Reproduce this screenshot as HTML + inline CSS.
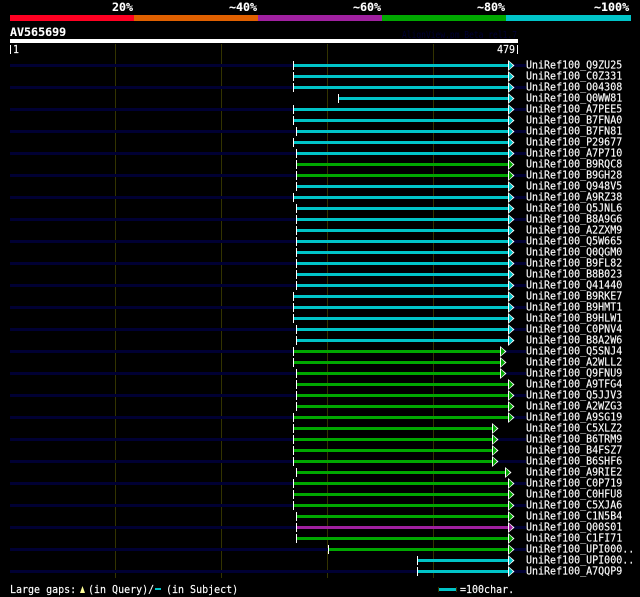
<!DOCTYPE html>
<html><head><meta charset="utf-8"><title>AV565699</title>
<style>
html,body{margin:0;padding:0;background:#000;width:640px;height:597px;overflow:hidden}
svg{display:block}
text{font-family:"DejaVu Sans Mono","Liberation Mono",monospace;font-size:10px;fill:#fff;white-space:pre;stroke:#fff;stroke-width:.12px}
.b{font-weight:bold;font-size:11.67px}
g text{transform:scaleY(1.1)}
rect{shape-rendering:crispEdges}
.d{fill:#000033}.c{fill:#00c4c8}.g{fill:#00a800}.p{fill:#a020a0}
</style></head><body>
<svg width="640" height="597" viewBox="0 0 640 597" xmlns="http://www.w3.org/2000/svg">
<defs>
<rect id="t" y="-3" width="1" height="9" fill="#fff"/>
<rect id="l" x="10" width="516" height="3" fill="#000033"/>
<g id="ac"><polygon points="0,-4 6.5,1.5 0,7" fill="#fff"/><polygon points="1,-2.5 5,1.5 1,5.5" fill="#00c4c8"/></g>
<g id="ag"><polygon points="0,-4 6.5,1.5 0,7" fill="#fff"/><polygon points="1,-2.5 5,1.5 1,5.5" fill="#00a800"/></g>
<g id="ap"><polygon points="0,-4 6.5,1.5 0,7" fill="#fff"/><polygon points="1,-2.5 5,1.5 1,5.5" fill="#a020a0"/></g>
</defs>
<rect x="115" y="44" width="1" height="534" fill="#333300"/>
<rect x="221" y="44" width="1" height="534" fill="#333300"/>
<rect x="327" y="44" width="1" height="534" fill="#333300"/>
<rect x="433" y="44" width="1" height="534" fill="#333300"/>
<text class="b" x="112" y="11">20%</text>
<text class="b" x="229" y="11">~40%</text>
<text class="b" x="353" y="11">~60%</text>
<text class="b" x="477" y="11">~80%</text>
<text class="b" x="594" y="11">~100%</text>
<rect x="10" y="15" width="124" height="6" fill="#ff0022"/>
<rect x="134" y="15" width="124" height="6" fill="#e06000"/>
<rect x="258" y="15" width="124" height="6" fill="#a020a0"/>
<rect x="382" y="15" width="124" height="6" fill="#00a800"/>
<rect x="506" y="15" width="125" height="6" fill="#00c4c8"/>
<text class="b" x="10" y="36">AV565699</text>
<text x="402" y="38" textLength="115" lengthAdjust="spacingAndGlyphs" style="fill:#000033;stroke:none">AlignView.pm Beta rel1.7</text>
<rect x="10" y="39" width="508" height="4" fill="#fff"/>
<rect x="10" y="45" width="1" height="9" fill="#fff"/>
<text transform="translate(13,53) scale(1,1.1)">1</text>
<text transform="translate(497,53) scale(1,1.1)">479</text>
<rect x="517" y="45" width="1" height="9" fill="#fff"/>

<g transform="translate(0,64)"><use href="#l"/><rect class="c" x="294" width="214" height="3"/><use href="#t" x="293"/><use href="#ac" x="508"/><text x="526" y="4">UniRef100_Q9ZU25</text></g>
<g transform="translate(0,75)"><rect class="c" x="294" width="214" height="3"/><use href="#t" x="293"/><use href="#ac" x="508"/><text x="526" y="4">UniRef100_C0Z331</text></g>
<g transform="translate(0,86)"><use href="#l"/><rect class="c" x="294" width="214" height="3"/><use href="#t" x="293"/><use href="#ac" x="508"/><text x="526" y="4">UniRef100_O04308</text></g>
<g transform="translate(0,97)"><rect class="c" x="339" width="169" height="3"/><use href="#t" x="338"/><use href="#ac" x="508"/><text x="526" y="4">UniRef100_Q0WW81</text></g>
<g transform="translate(0,108)"><use href="#l"/><rect class="c" x="294" width="214" height="3"/><use href="#t" x="293"/><use href="#ac" x="508"/><text x="526" y="4">UniRef100_A7PEE5</text></g>
<g transform="translate(0,119)"><rect class="c" x="294" width="214" height="3"/><use href="#t" x="293"/><use href="#ac" x="508"/><text x="526" y="4">UniRef100_B7FNA0</text></g>
<g transform="translate(0,130)"><use href="#l"/><rect class="c" x="297" width="211" height="3"/><use href="#t" x="296"/><use href="#ac" x="508"/><text x="526" y="4">UniRef100_B7FN81</text></g>
<g transform="translate(0,141)"><rect class="c" x="294" width="214" height="3"/><use href="#t" x="293"/><use href="#ac" x="508"/><text x="526" y="4">UniRef100_P29677</text></g>
<g transform="translate(0,152)"><use href="#l"/><rect class="c" x="297" width="211" height="3"/><use href="#t" x="296"/><use href="#ac" x="508"/><text x="526" y="4">UniRef100_A7P710</text></g>
<g transform="translate(0,163)"><rect class="g" x="297" width="211" height="3"/><use href="#t" x="296"/><use href="#ag" x="508"/><text x="526" y="4">UniRef100_B9RQC8</text></g>
<g transform="translate(0,174)"><use href="#l"/><rect class="g" x="297" width="211" height="3"/><use href="#t" x="296"/><use href="#ag" x="508"/><text x="526" y="4">UniRef100_B9GH28</text></g>
<g transform="translate(0,185)"><rect class="c" x="297" width="211" height="3"/><use href="#t" x="296"/><use href="#ac" x="508"/><text x="526" y="4">UniRef100_Q948V5</text></g>
<g transform="translate(0,196)"><use href="#l"/><rect class="c" x="294" width="214" height="3"/><use href="#t" x="293"/><use href="#ac" x="508"/><text x="526" y="4">UniRef100_A9RZ38</text></g>
<g transform="translate(0,207)"><rect class="c" x="297" width="211" height="3"/><use href="#t" x="296"/><use href="#ac" x="508"/><text x="526" y="4">UniRef100_Q5JNL6</text></g>
<g transform="translate(0,218)"><use href="#l"/><rect class="c" x="297" width="211" height="3"/><use href="#t" x="296"/><use href="#ac" x="508"/><text x="526" y="4">UniRef100_B8A9G6</text></g>
<g transform="translate(0,229)"><rect class="c" x="297" width="211" height="3"/><use href="#t" x="296"/><use href="#ac" x="508"/><text x="526" y="4">UniRef100_A2ZXM9</text></g>
<g transform="translate(0,240)"><use href="#l"/><rect class="c" x="297" width="211" height="3"/><use href="#t" x="296"/><use href="#ac" x="508"/><text x="526" y="4">UniRef100_Q5W665</text></g>
<g transform="translate(0,251)"><rect class="c" x="297" width="211" height="3"/><use href="#t" x="296"/><use href="#ac" x="508"/><text x="526" y="4">UniRef100_Q0QGM0</text></g>
<g transform="translate(0,262)"><use href="#l"/><rect class="c" x="297" width="211" height="3"/><use href="#t" x="296"/><use href="#ac" x="508"/><text x="526" y="4">UniRef100_B9FL82</text></g>
<g transform="translate(0,273)"><rect class="c" x="297" width="211" height="3"/><use href="#t" x="296"/><use href="#ac" x="508"/><text x="526" y="4">UniRef100_B8B023</text></g>
<g transform="translate(0,284)"><use href="#l"/><rect class="c" x="297" width="211" height="3"/><use href="#t" x="296"/><use href="#ac" x="508"/><text x="526" y="4">UniRef100_Q41440</text></g>
<g transform="translate(0,295)"><rect class="c" x="294" width="214" height="3"/><use href="#t" x="293"/><use href="#ac" x="508"/><text x="526" y="4">UniRef100_B9RKE7</text></g>
<g transform="translate(0,306)"><use href="#l"/><rect class="c" x="294" width="214" height="3"/><use href="#t" x="293"/><use href="#ac" x="508"/><text x="526" y="4">UniRef100_B9HMT1</text></g>
<g transform="translate(0,317)"><rect class="c" x="294" width="214" height="3"/><use href="#t" x="293"/><use href="#ac" x="508"/><text x="526" y="4">UniRef100_B9HLW1</text></g>
<g transform="translate(0,328)"><use href="#l"/><rect class="c" x="297" width="211" height="3"/><use href="#t" x="296"/><use href="#ac" x="508"/><text x="526" y="4">UniRef100_C0PNV4</text></g>
<g transform="translate(0,339)"><rect class="c" x="297" width="211" height="3"/><use href="#t" x="296"/><use href="#ac" x="508"/><text x="526" y="4">UniRef100_B8A2W6</text></g>
<g transform="translate(0,350)"><use href="#l"/><rect class="g" x="294" width="206" height="3"/><use href="#t" x="293"/><use href="#ag" x="500"/><text x="526" y="4">UniRef100_Q5SNJ4</text></g>
<g transform="translate(0,361)"><rect class="g" x="294" width="206" height="3"/><use href="#t" x="293"/><use href="#ag" x="500"/><text x="526" y="4">UniRef100_A2WLL2</text></g>
<g transform="translate(0,372)"><use href="#l"/><rect class="g" x="297" width="203" height="3"/><use href="#t" x="296"/><use href="#ag" x="500"/><text x="526" y="4">UniRef100_Q9FNU9</text></g>
<g transform="translate(0,383)"><rect class="g" x="297" width="211" height="3"/><use href="#t" x="296"/><use href="#ag" x="508"/><text x="526" y="4">UniRef100_A9TFG4</text></g>
<g transform="translate(0,394)"><use href="#l"/><rect class="g" x="297" width="211" height="3"/><use href="#t" x="296"/><use href="#ag" x="508"/><text x="526" y="4">UniRef100_Q5JJV3</text></g>
<g transform="translate(0,405)"><rect class="g" x="297" width="211" height="3"/><use href="#t" x="296"/><use href="#ag" x="508"/><text x="526" y="4">UniRef100_A2WZG3</text></g>
<g transform="translate(0,416)"><use href="#l"/><rect class="g" x="294" width="214" height="3"/><use href="#t" x="293"/><use href="#ag" x="508"/><text x="526" y="4">UniRef100_A9SG19</text></g>
<g transform="translate(0,427)"><rect class="g" x="294" width="198" height="3"/><use href="#t" x="293"/><use href="#ag" x="492"/><text x="526" y="4">UniRef100_C5XLZ2</text></g>
<g transform="translate(0,438)"><use href="#l"/><rect class="g" x="294" width="198" height="3"/><use href="#t" x="293"/><use href="#ag" x="492"/><text x="526" y="4">UniRef100_B6TRM9</text></g>
<g transform="translate(0,449)"><rect class="g" x="294" width="198" height="3"/><use href="#t" x="293"/><use href="#ag" x="492"/><text x="526" y="4">UniRef100_B4FSZ7</text></g>
<g transform="translate(0,460)"><use href="#l"/><rect class="g" x="294" width="198" height="3"/><use href="#t" x="293"/><use href="#ag" x="492"/><text x="526" y="4">UniRef100_B6SHF6</text></g>
<g transform="translate(0,471)"><rect class="g" x="297" width="208" height="3"/><use href="#t" x="296"/><use href="#ag" x="505"/><text x="526" y="4">UniRef100_A9RIE2</text></g>
<g transform="translate(0,482)"><use href="#l"/><rect class="g" x="294" width="214" height="3"/><use href="#t" x="293"/><use href="#ag" x="508"/><text x="526" y="4">UniRef100_C0P719</text></g>
<g transform="translate(0,493)"><rect class="g" x="294" width="214" height="3"/><use href="#t" x="293"/><use href="#ag" x="508"/><text x="526" y="4">UniRef100_C0HFU8</text></g>
<g transform="translate(0,504)"><use href="#l"/><rect class="g" x="294" width="214" height="3"/><use href="#t" x="293"/><use href="#ag" x="508"/><text x="526" y="4">UniRef100_C5XJA6</text></g>
<g transform="translate(0,515)"><rect class="g" x="297" width="211" height="3"/><use href="#t" x="296"/><use href="#ag" x="508"/><text x="526" y="4">UniRef100_C1N5B4</text></g>
<g transform="translate(0,526)"><use href="#l"/><rect class="p" x="297" width="211" height="3"/><use href="#t" x="296"/><use href="#ap" x="508"/><text x="526" y="4">UniRef100_Q00S01</text></g>
<g transform="translate(0,537)"><rect class="g" x="297" width="211" height="3"/><use href="#t" x="296"/><use href="#ag" x="508"/><text x="526" y="4">UniRef100_C1FI71</text></g>
<g transform="translate(0,548)"><use href="#l"/><rect class="g" x="329" width="179" height="3"/><use href="#t" x="328"/><use href="#ag" x="508"/><text x="526" y="4">UniRef100_UPI000..</text></g>
<g transform="translate(0,559)"><rect class="c" x="418" width="90" height="3"/><use href="#t" x="417"/><use href="#ac" x="508"/><text x="526" y="4">UniRef100_UPI000..</text></g>
<g transform="translate(0,570)"><use href="#l"/><rect class="c" x="418" width="90" height="3"/><use href="#t" x="417"/><use href="#ac" x="508"/><text x="526" y="4">UniRef100_A7QQP9</text></g>

<text transform="translate(10,593) scale(1,1.1)">Large gaps:</text>
<polygon points="82.5,586 85,593 80,593" fill="#ffff99"/>
<text transform="translate(88,593) scale(1,1.1)">(in Query)/</text>
<rect x="155" y="588" width="6" height="2" fill="#00c4c8"/>
<text transform="translate(166,593) scale(1,1.1)">(in Subject)</text>
<rect x="438" y="587" width="1" height="5" fill="#333300"/>
<rect x="456" y="587" width="1" height="5" fill="#333300"/>
<rect x="439" y="588" width="17" height="3" fill="#00c4c8"/>
<text transform="translate(460,593) scale(1,1.1)">=100char.</text>
</svg>
</body></html>
